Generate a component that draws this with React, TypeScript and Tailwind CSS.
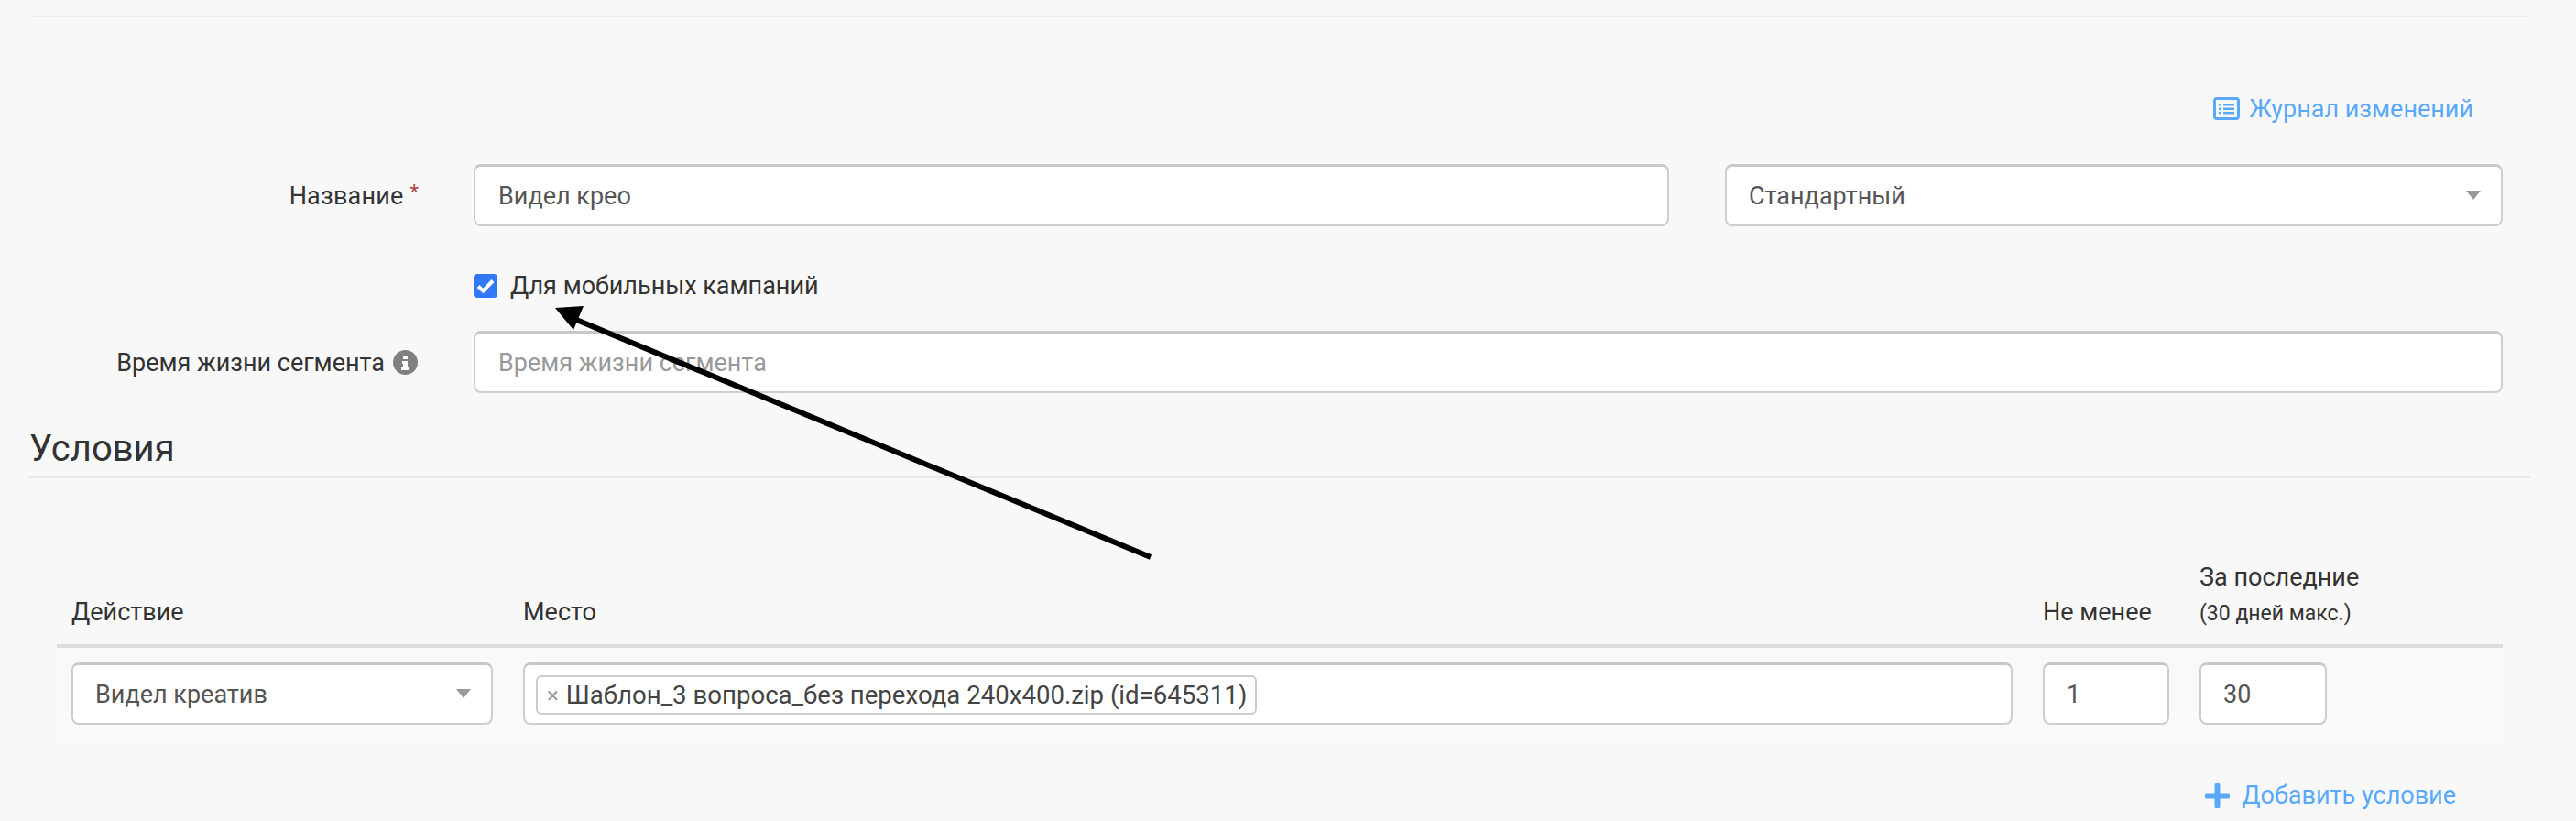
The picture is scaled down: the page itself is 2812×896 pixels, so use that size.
const font = "[font-family:Roboto,sans-serif]";
const field =
  'h-[68px] rounded-[8px] border-2 border-[#cdcdcd] border-t-[3px] border-t-[#c8c8c8] bg-white pt-[2px] text-[27px] text-[#555555]';

function Caret() {
  return (
    <svg width="16" height="10" viewBox="0 0 16 10" className="-mt-[4px] shrink-0">
      <path d="M0 0h16L8 10z" fill="#999999" />
    </svg>
  );
}

function LogIcon() {
  return (
    <svg width="29" height="25" viewBox="0 0 29 25" className="shrink-0">
      <rect x="1.5" y="1.5" width="26" height="22" rx="2.5" fill="none" stroke="#5aa9f8" strokeWidth="3" />
      <path d="M6 7h3v2.5H6zM6 11.5h3V14H6zM6 16h3v2.5H6zM11 7h12v2.5H11zM11 11.5h12V14H11zM11 16h12v2.5H11z" fill="#5aa9f8" />
    </svg>
  );
}

function InfoIcon() {
  return (
    <svg width="27" height="27" viewBox="0 0 27 27" className="shrink-0">
      <circle cx="13.5" cy="13.5" r="13.5" fill="#808080" />
      <path d="M11 6h5v4h-5zM10 12h6v7h2v3H9v-3h2v-4h-1z" fill="#ffffff" />
    </svg>
  );
}

function PlusIcon() {
  return (
    <svg width="27" height="27" viewBox="0 0 27 27" className="shrink-0">
      <path d="M10.5 1.5a1.5 1.5 0 0 1 1.5-1.5h3a1.5 1.5 0 0 1 1.5 1.5v9h9a1.5 1.5 0 0 1 1.5 1.5v3a1.5 1.5 0 0 1-1.5 1.5h-9v9a1.5 1.5 0 0 1-1.5 1.5h-3a1.5 1.5 0 0 1-1.5-1.5v-9h-9A1.5 1.5 0 0 1 0 15v-3a1.5 1.5 0 0 1 1.5-1.5h9z" fill="#5aa9f8" />
    </svg>
  );
}

export default function App() {
  return (
    <div className={`relative h-[896px] overflow-hidden bg-[#f8f8f8] pt-[17px] pl-[32px] pr-[50px] text-[#333333] ${font}`}>
      <div className="h-[2px] bg-[#eeeeee]" />

      <div className="mt-[87px] flex h-[25px] items-center justify-end gap-[10px] pr-[62px] text-[27px] text-[#5aa9f8]">
        <LogIcon />
        <span className="pt-[2px]">Журнал изменений</span>
      </div>

      {/* основная форма */}
      <div className="mt-[48px] flex items-center">
        <div className="flex w-[485px] justify-end pr-[60px] pt-[2px] text-[27px]">
          <span className="tracking-[0.2px]">Название</span>
          <span className="mt-[3px] ml-[7px] text-[22px] leading-[26px] text-[#a94442]">*</span>
        </div>
        <div className={`flex w-[1305px] items-center px-[25px] ${field}`}>Видел крео</div>
        <div className={`ml-[61px] flex w-[849px] items-center justify-between pl-[24px] pr-[22px] ${field}`}>
          Стандартный
          <Caret />
        </div>
      </div>

      <div className="mt-[52px] flex h-[26px] items-center pl-[485px]">
        <span className="flex h-[26px] w-[26px] items-center justify-center rounded-[4px] bg-[#3278f6]">
          <svg width="20" height="16" viewBox="0 0 20 16">
            <path d="M2 8.5l5.5 5L18 2.5" fill="none" stroke="#ffffff" strokeWidth="4" />
          </svg>
        </span>
        <span className="ml-[14px] text-[27px]">Для мобильных кампаний</span>
      </div>

      <div className="mt-[36px] flex items-center">
        <div className="flex w-[485px] items-center justify-end gap-[9px] pr-[61px] text-[27px]">
          <span className="pt-[2px]">Время жизни сегмента</span>
          <InfoIcon />
        </div>
        <div className={`flex w-[2215px] items-center px-[25px] text-[#999999] ${field}`}>Время жизни сегмента</div>
      </div>

      {/* условия */}
      <div className="mt-[35px] border-b-2 border-[#e8e8e8] pb-[6px] pt-[2px] text-[40px] leading-[48px]">Условия</div>

      <div className="mt-[66px] ml-[30px] w-[2670px] text-[27px]">
        <div className="flex h-[119px] items-end border-b-4 border-[#dddddd] pb-[15px]">
          <div className="w-[509px] pl-[16px]">Действие</div>
          <div className="w-[1659px]">Место</div>
          <div className="w-[171px]">Не менее</div>
          <div className="flex flex-col">
            <span className="leading-[32px]">За последние</span>
            <span className="mt-[8px] mb-[3px] text-[23px] leading-[31px]">(30 дней макс.)</span>
          </div>
        </div>
        <div className="flex h-[103px] items-start bg-[#f9f9f9] pt-[16px] pl-[16px]">
          <div className={`flex w-[460px] items-center justify-between pl-[24px] pr-[22px] ${field}`}>
            Видел креатив
            <Caret />
          </div>
          <div className={`ml-[33px] flex w-[1626px] items-center pl-[12px] ${field}`}>
            <span className="flex h-[43px] w-[787px] items-center rounded-[6px] border-2 border-[#cccccc] pl-[10px] text-[27.6px] whitespace-nowrap text-[#444444]">
              <span className="mr-[8px] text-[24px] text-[#999999]">×</span>
              Шаблон_3 вопроса_без перехода 240x400.zip (id=645311)
            </span>
          </div>
          <div className={`ml-[33px] flex w-[138px] items-center pl-[24px] ${field}`}>1</div>
          <div className={`ml-[33px] flex w-[139px] items-center pl-[24px] ${field}`}>30</div>
        </div>
      </div>

      <div className="mt-[43px] flex h-[30px] items-center justify-end gap-[13px] pr-[81px] text-[27px] text-[#5aa9f8]">
        <PlusIcon />
        <span>Добавить условие</span>
      </div>

      {/* стрелка поверх формы */}
      <svg width="2812" height="896" viewBox="0 0 2812 896" className="pointer-events-none absolute top-0 left-0">
        <path d="M1256 608L622 346" fill="none" stroke="#000000" strokeWidth="6" />
        <path d="M606 336L637 334L626 360z" fill="#000000" />
      </svg>
    </div>
  );
}
